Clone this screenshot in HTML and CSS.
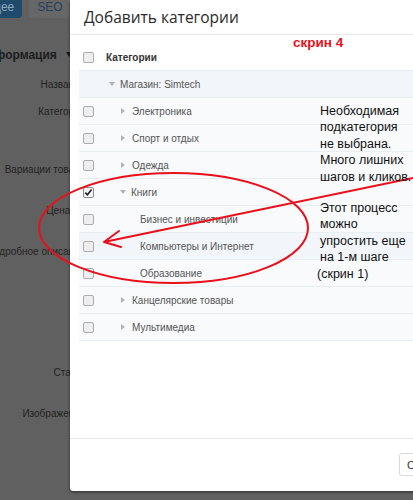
FILE: index.html
```html
<!DOCTYPE html>
<html lang="ru">
<head>
<meta charset="utf-8">
<title>Добавить категории</title>
<link rel="stylesheet" href="styles.css">
</head>
<body>
<div class="page">
  <nav class="tabs">
    <span class="tab tab-active">Общее</span>
    <span class="tab">SEO</span>
    <span class="tab tab-more"></span>
  </nav>
  <h2 class="section-title">Информация <span class="caret"></span></h2>
  <div class="form">
    <div class="f-row h27"><span class="f-label">Название:</span></div>
    <div class="f-row h58"><span class="f-label">Категории:</span></div>
    <div class="f-row h41"><span class="f-label">Вариации товара:</span></div>
    <div class="f-row h41"><span class="f-label">Цена ($):</span></div>
    <div class="f-row h121"><span class="f-label">Подробное описание:</span></div>
    <div class="f-row h41"><span class="f-label">Статус:</span></div>
    <div class="f-row h41"><span class="f-label">Изображения:</span></div>
  </div>
</div>

<div class="modal">
  <div class="modal-header">
    <h3 class="modal-title">Добавить категории</h3>
  </div>
  <div class="modal-body">
    <div class="tree">
      <div class="tr tr-head">
        <span class="cell-check"><span class="cb"></span></span>
        <span class="cell-name">Категории</span>
      </div>
      <div class="tr tr-hl">
        <span class="cell-check"></span>
        <span class="cell-name lvl1"><span class="tog tog-open"></span>Магазин: Simtech</span>
      </div>
      <div class="tr">
        <span class="cell-check"><span class="cb"></span></span>
        <span class="cell-name lvl2"><span class="tog tog-closed"></span>Электроника</span>
      </div>
      <div class="tr">
        <span class="cell-check"><span class="cb"></span></span>
        <span class="cell-name lvl2"><span class="tog tog-closed"></span>Спорт и отдых</span>
      </div>
      <div class="tr">
        <span class="cell-check"><span class="cb"></span></span>
        <span class="cell-name lvl2"><span class="tog tog-closed"></span>Одежда</span>
      </div>
      <div class="tr">
        <span class="cell-check"><span class="cb cb-on"><svg viewBox="0 0 11 11" width="11" height="11"><path d="M2.3 5.6 L4.4 7.8 L8.6 2.6" fill="none" stroke="#222" stroke-width="1.6"/></svg></span></span>
        <span class="cell-name lvl2"><span class="tog tog-open"></span>Книги</span>
      </div>
      <div class="tr">
        <span class="cell-check"><span class="cb"></span></span>
        <span class="cell-name lvl3">Бизнес и инвестиции</span>
      </div>
      <div class="tr tr-hl">
        <span class="cell-check"><span class="cb"></span></span>
        <span class="cell-name lvl3">Компьютеры и Интернет</span>
      </div>
      <div class="tr">
        <span class="cell-check"><span class="cb"></span></span>
        <span class="cell-name lvl3">Образование</span>
      </div>
      <div class="tr">
        <span class="cell-check"><span class="cb"></span></span>
        <span class="cell-name lvl2"><span class="tog tog-closed"></span>Канцелярские товары</span>
      </div>
      <div class="tr">
        <span class="cell-check"><span class="cb"></span></span>
        <span class="cell-name lvl2"><span class="tog tog-closed"></span>Мультимедиа</span>
      </div>
    </div>
  </div>
  <div class="modal-footer">
    <button class="btn">Сохранить</button>
  </div>
</div>

<div class="notes">
  <svg class="marks" viewBox="0 0 413 500" width="413" height="500">
    <ellipse cx="173.5" cy="228" rx="134.5" ry="55" fill="none" stroke="#e8111b" stroke-width="2"/>
    <path d="M413 178 L104 242 M119 231 L104 242 L121 247" fill="none" stroke="#e8111b" stroke-width="2" stroke-linejoin="round" stroke-linecap="round"/>
  </svg>
  <div class="note-tag">скрин 4</div>
  <div class="note note-1">Необходимая<br>подкатегория<br>не выбрана.<br>Много лишних<br>шагов и кликов.</div>
  <div class="note note-2">Этот процесс<br>можно<br>упростить еще<br>на 1-м шаге<br><span class="note-out">(скрин 1)</span></div>
</div>
</body>
</html>
```

FILE: styles.css
```css
html, body {
  margin: 0;
  padding: 0;
}
body {
  width: 413px;
  height: 500px;
  overflow: hidden;
  position: relative;
  background: #5f5f5f;
  font-family: "Liberation Sans", Arial, sans-serif;
}

/* background page (dimmed by the modal backdrop) */
.page {
  height: 500px;
  overflow: hidden;
  background: #606060;
}
.tabs {
  display: flex;
  gap: 7px;
  margin-left: -33px;
  height: 18px;
}
.tab {
  display: block;
  height: 18px;
  line-height: 15px;
  padding: 0 8px;
  font-size: 12px;
  color: #24405a;
  background: #676767;
  border-radius: 0 0 4px 4px;
  white-space: nowrap;
}
.tab-active {
  background: #1e4a6c;
  color: #8fa9bf;
}
.tab-more {
  width: 30px;
  padding: 0;
}
.section-title {
  margin: 29px 0 0 -21px;
  font-size: 12px;
  line-height: 16px;
  font-weight: bold;
  color: #1c1c1c;
  white-space: nowrap;
}
.caret {
  display: inline-block;
  margin-left: 6px;
  vertical-align: 2px;
  border-left: 3.5px solid transparent;
  border-right: 3.5px solid transparent;
  border-top: 5px solid #1c1c1c;
}
.form {
  margin-top: 15px;
}
.f-row {
  width: 88px;
  display: flex;
  justify-content: flex-end;
  align-items: flex-start;
}
.h27 { height: 27px; }
.h41 { height: 41px; }
.h58 { height: 58px; }
.h121 { height: 121px; }
.f-label {
  font-size: 10px;
  line-height: 14px;
  color: #232323;
  white-space: nowrap;
}

/* modal */
.modal {
  position: absolute;
  top: 0;
  left: 70px;
  width: 440px;
  height: 491px;
  background: #fff;
  border-radius: 0 0 0 3px;
  box-shadow: 0 1px 3px rgba(0, 0, 0, 0.55);
  display: flex;
  flex-direction: column;
}
.modal-header {
  height: 34px;
  border-bottom: 1px solid #e6e9ec;
  display: flex;
  align-items: center;
  padding-left: 14px;
}
.modal-title {
  margin: 0;
  font-family: "Open Sans", "Liberation Sans", sans-serif;
  font-size: 15.5px;
  font-weight: 400;
  color: #2b2b2b;
  white-space: nowrap;
}
.modal-body {
  height: 394px;
  padding: 9px 0 0 9px;
}
.tree {
  display: flex;
  flex-direction: column;
}
.tr {
  display: flex;
  align-items: center;
  height: 26px;
  border-bottom: 1px solid #e9eef2;
  background: #f8fafc;
  font-size: 10px;
  color: #555;
  white-space: nowrap;
}
.tr-head {
  background: #fff;
  font-weight: bold;
  color: #333;
}
.tr-hl {
  background: #f2f6fa;
}
.cell-check {
  width: 27px;
  display: flex;
  align-items: center;
  padding-left: 4px;
  box-sizing: border-box;
}
.cb {
  display: block;
  width: 11px;
  height: 11px;
  box-sizing: border-box;
  border: 1px solid #ababab;
  border-radius: 2px;
  background: #eeeeee;
  position: relative;
}
.cb svg {
  position: absolute;
  left: -1px;
  top: -1px;
}
.cb-on {
  background: #f4f4f4;
  border-color: #8f8f8f;
}
.cell-name {
  display: flex;
  align-items: center;
}
.lvl1 { padding-left: 2px; }
.lvl2 { padding-left: 13px; }
.lvl3 { padding-left: 34px; }
.tog {
  display: block;
  width: 0;
  height: 0;
}
.tog-open {
  margin: 0 5px 0 1px;
  border-left: 3.5px solid transparent;
  border-right: 3.5px solid transparent;
  border-top: 4px solid #b3b3b3;
}
.tog-closed {
  margin: 0 7px 0 2px;
  border-top: 3.5px solid transparent;
  border-bottom: 3.5px solid transparent;
  border-left: 4px solid #b3b3b3;
}
.modal-footer {
  border-top: 1px solid #e6e9ec;
  padding: 14px 0 0 329px;
  flex: 1;
}
.btn {
  display: block;
  height: 23px;
  padding: 0 7px;
  font-family: "Liberation Sans", Arial, sans-serif;
  font-size: 11px;
  color: #333;
  background: #fff;
  border: 1px solid #d9d9d9;
  border-radius: 3px;
  white-space: nowrap;
}

/* hand-drawn annotations over the screenshot */
.notes {
  position: absolute;
  left: 0;
  top: 0;
  width: 413px;
  height: 500px;
  pointer-events: none;
}
.marks {
  position: absolute;
  left: 0;
  top: 0;
}
.note-tag {
  position: absolute;
  left: 293px;
  top: 35px;
  font-size: 13.5px;
  line-height: 16px;
  font-weight: bold;
  color: #e8111b;
  white-space: nowrap;
}
.note {
  position: absolute;
  left: 320px;
  font-size: 12.5px;
  line-height: 16.4px;
  color: #111;
  white-space: nowrap;
}
.note-1 { top: 103px; }
.note-2 { top: 200px; }
.note-out {
  margin-left: -3px;
}
```
